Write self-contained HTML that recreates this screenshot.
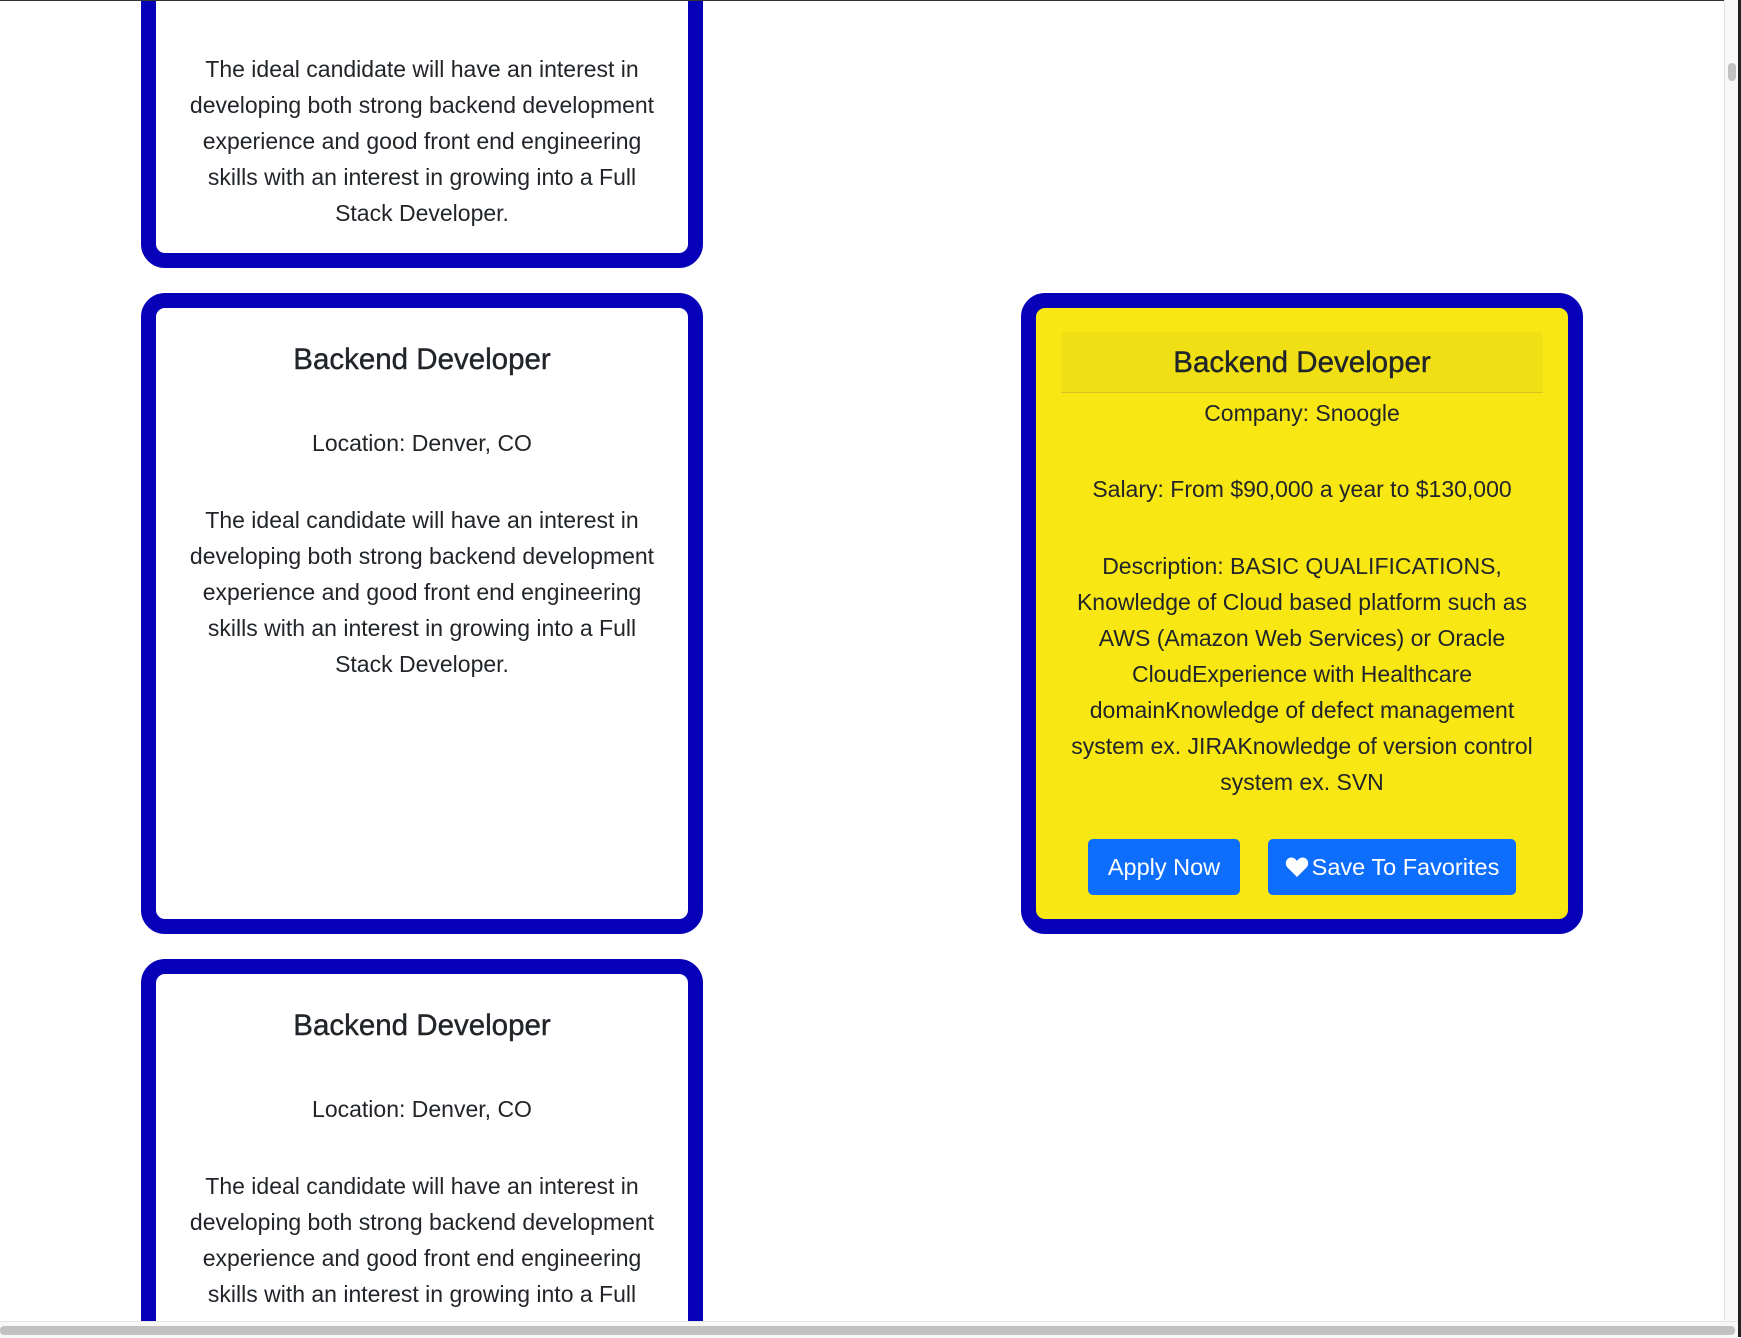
<!DOCTYPE html>
<html><head><meta charset="utf-8"><style>
html,body{margin:0;padding:0;}
body{width:1741px;height:1337px;position:relative;overflow:hidden;background:#fff;font-family:"Liberation Sans",Helvetica,Arial,sans-serif;color:#212529;}
.card{position:absolute;box-sizing:border-box;border:15px solid #0600b8;border-radius:24px;background:#fff;overflow:hidden;}
.t{position:absolute;left:0;right:0;text-align:center;font-size:23px;line-height:36px;white-space:nowrap;letter-spacing:0;}
.h{font-size:29.5px;line-height:36px;font-weight:500;-webkit-text-stroke:0.4px #212529;}
.btn{position:absolute;background:#0d6efd;color:#fff;border-radius:5px;font-size:23.5px;line-height:56px;text-align:center;}
</style></head><body>
<div style="position:absolute;left:0;top:0;width:1741px;height:1321px;overflow:hidden;">
<div class="card" style="left:141px;top:-40px;width:562px;height:308px;">
 <div class="t" style="top:76px;">The ideal candidate will have an interest in<br>developing both strong backend development<br>experience and good front end engineering<br>skills with an interest in growing into a Full<br>Stack Developer.</div>
</div>
<div class="card" style="left:141px;top:293px;width:562px;height:641px;">
 <div class="t h" style="top:34px;">Backend Developer</div>
 <div class="t" style="top:117px;">Location: Denver, CO</div>
 <div class="t" style="top:194px;">The ideal candidate will have an interest in<br>developing both strong backend development<br>experience and good front end engineering<br>skills with an interest in growing into a Full<br>Stack Developer.</div>
</div>
<div class="card" style="left:141px;top:959px;width:562px;height:500px;">
 <div class="t h" style="top:34px;">Backend Developer</div>
 <div class="t" style="top:117px;">Location: Denver, CO</div>
 <div class="t" style="top:194px;">The ideal candidate will have an interest in<br>developing both strong backend development<br>experience and good front end engineering<br>skills with an interest in growing into a Full<br>Stack Developer.</div>
</div>
<div class="card" style="left:1021px;top:293px;width:562px;height:641px;background:#f8e712;">
 <div style="position:absolute;left:25px;top:24px;width:482px;height:60px;background:#efdf14;border-bottom:1px solid #d4c525;border-radius:4px 4px 0 0;"></div>
 <div class="t h" style="top:37px;">Backend Developer</div>
 <div class="t" style="top:87px;">Company: Snoogle</div>
 <div class="t" style="top:163px;">Salary: From $90,000 a year to $130,000</div>
 <div class="t" style="top:240px;">Description: BASIC QUALIFICATIONS,<br>Knowledge of Cloud based platform such as<br>AWS (Amazon Web Services) or Oracle<br>CloudExperience with Healthcare<br>domainKnowledge of defect management<br>system ex. JIRAKnowledge of version control<br>system ex. SVN</div>
 <div class="btn" style="left:52px;top:531px;width:152px;height:56px;">Apply Now</div>
 <div class="btn" style="left:232px;top:531px;width:248px;height:56px;"><svg width="24" height="22" viewBox="0 0 24 22" style="vertical-align:-3px;margin-right:3px"><path d="M12 21 L2.5 11.5 C-0.5 8.5 0.5 2 6 1.5 C9 1.3 11 3.5 12 5 C13 3.5 15 1.3 18 1.5 C23.5 2 24.5 8.5 21.5 11.5 Z" fill="#fff"/></svg>Save To Favorites</div>
</div>
</div>
<div style="position:absolute;left:0;top:0;width:1741px;height:1px;background:#333;"></div>
<div style="position:absolute;left:1724px;top:0;width:14px;height:1321px;background:#f8f8f8;border-left:1px solid #e4e4e4;"></div>
<div style="position:absolute;left:1728px;top:63px;width:8px;height:18px;background:#c1c1c1;border-radius:4px;"></div>
<div style="position:absolute;left:1738px;top:0;width:3px;height:1337px;background:#222;"></div>
<div style="position:absolute;left:0;top:1321px;width:1738px;height:16px;background:#f8f8f8;border-top:1px solid #e4e4e4;"></div>
<div style="position:absolute;left:0;top:1326px;width:1735px;height:9px;background:#c1c1c1;border-radius:4px;"></div>
</body></html>
